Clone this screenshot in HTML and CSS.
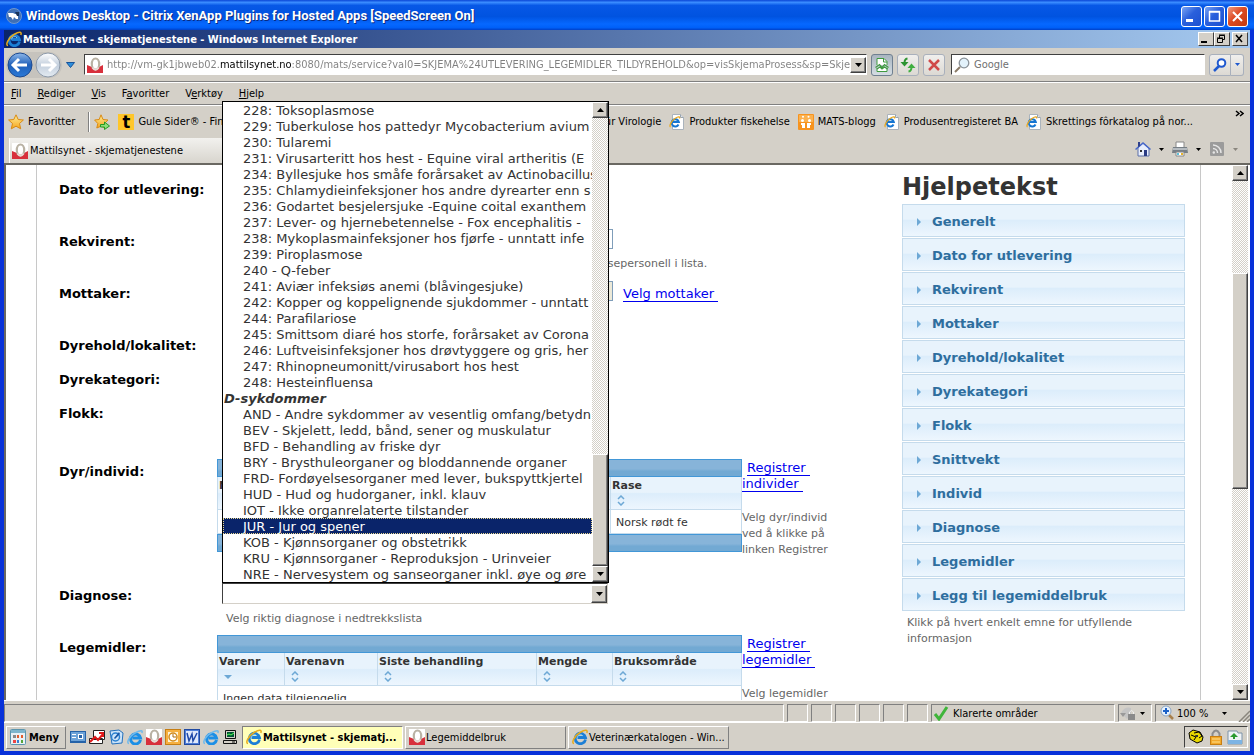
FILE: index.html
```html
<!DOCTYPE html>
<html lang="no">
<head>
<meta charset="utf-8">
<title>Mattilsynet - skjematjenestene</title>
<link rel="stylesheet" href="styles.css">
</head>
<body>
<svg class="sprite" aria-hidden="true">
  <defs>
    <linearGradient id="g-blue" x1="0" y1="0" x2="0" y2="1"><stop offset="0" stop-color="#8fb8ea"/><stop offset=".5" stop-color="#1f5fb8"/><stop offset="1" stop-color="#2b7ad8"/></linearGradient>
    <linearGradient id="g-pale" x1="0" y1="0" x2="0" y2="1"><stop offset="0" stop-color="#ffffff"/><stop offset=".5" stop-color="#c3cfdd"/><stop offset="1" stop-color="#e4ebf2"/></linearGradient>
    <linearGradient id="g-gold" x1="0" y1="0" x2="0" y2="1"><stop offset="0" stop-color="#ffef9a"/><stop offset="1" stop-color="#f5a51c"/></linearGradient>
  </defs>
  <symbol id="i-lock" viewBox="0 0 16 16"><path fill="#fff" d="M0 0h16v16H0z"/><path fill="#d8303c" d="M0 8l5 2 7 0 4-2v8H0z"/><ellipse cx="8.500" cy="7" rx="3.700" ry="5.500" fill="#fff" stroke="#b9b2a4" stroke-width="2.200"/><path d="M5.500 10.500q3 4.500 6 0" fill="none" stroke="#ead9d4" stroke-width="2"/></symbol>
  <symbol id="i-ie" viewBox="0 0 16 16"><path d="M13.500 10.500A5.200 5.200 0 1 1 13.500 8.500H5.500" fill="none" stroke="#1c7fd6" stroke-width="2.800"/><path d="M5.500 8.500A3 3 0 0 1 11 7" fill="none" stroke="#7cc4f4"/><path d="M2 14.500C-1 14.500 2 7 8 3.500S16 1 14.800 4" fill="none" stroke="#e8ac1c" stroke-width="1.500"/></symbol>
  <symbol id="i-iequick" viewBox="0 0 16 16"><path d="M13.500 11A5 5 0 1 1 13.500 9H5.500" fill="none" stroke="#1c8fe6" stroke-width="3"/><path d="M2 14.500C-1 14.500 2 7 8 4S16 1 14.800 4" fill="none" stroke="#6fb9ec" stroke-width="1.500"/></symbol>
  <symbol id="i-page" viewBox="0 0 16 16"><path d="M3.500.500h8l3 3v12h-11z" fill="#fff" stroke="#aab3bc"/><path d="M11.500.500v3h3" fill="#dfe4ea" stroke="#9aa4ae"/><path d="M9.500 10.500A3.600 3.600 0 1 1 9.800 8H3" fill="none" stroke="#1676d2" stroke-width="2"/><path d="M1.500 13C0 12.500 2 7 6 4.500S11 3 10.500 4.500" fill="none" stroke="#eaa81e" stroke-width="1.300"/></symbol>
  <symbol id="i-star" viewBox="0 0 16 16"><path d="M8 .8l2.200 4.700 5.200.5-3.900 3.500 1.200 5.300L8 12.200l-4.700 2.600 1.200-5.300L.6 6l5.200-.5z" fill="url(#g-gold)" stroke="#d98a14"/></symbol>
  <symbol id="i-staradd" viewBox="0 0 16 16"><path d="M7 .8l2 4.700 5 .5-3.700 3.500 1 4.500L7 12.200 2.800 14l1-4.500L.6 6l4.600-.5z" fill="url(#g-gold)" stroke="#d98a14"/><path d="M6.500 10.500h4V8l5 4-5 3.500V13h-4z" fill="#8ee07a" stroke="#259a23"/></symbol>
  <symbol id="i-mats" viewBox="0 0 16 16"><rect width="16" height="16" rx="1" fill="#f7931e"/><path d="M1 1h14v7H1z" fill="#fbb14f"/><g fill="#fff"><circle cx="4.500" cy="6.500" r="1.500"/><circle cx="11.500" cy="6.500" r="1.500"/><circle cx="5" cy="2.800" r="1"/><circle cx="10.500" cy="2.800" r="1"/><path d="M3 9h4v5H4V11H3zM9 9h4v2h-1v3H9z"/></g></symbol>
  <symbol id="i-down" viewBox="0 0 7 4"><path d="M0 0h7L3.500 4z"/></symbol>
  <symbol id="i-up" viewBox="0 0 7 4"><path d="M0 4h7L3.500 0z"/></symbol>
  <symbol id="i-sort" viewBox="0 0 8 11"><path d="M1 4l3-3 3 3M1 7l3 3 3-3" fill="none" stroke="#6da8d5" stroke-width="1.500"/></symbol>
  <symbol id="i-right" viewBox="0 0 4 8"><path d="M0 0l4 4-4 4z" fill="#6da8d5"/></symbol>
  <symbol id="i-mag" viewBox="0 0 16 16"><path d="M1 15l5-5" stroke="#8a7a66" stroke-width="2"/><circle cx="10" cy="6" r="4.800" fill="#e3f2fb" stroke="#8a9299" stroke-width="1.300"/></symbol>
</svg>

<div class="desktop">
  <header class="xp-title">
    <svg class="icon" viewBox="0 0 16 16"><circle cx="8" cy="8" r="7.500" fill="#3f6fb4" stroke="#6f97cf"/><path d="M2 5h5l2 1h3v5h-2l-2-2-1 3-2-3H3z" fill="#fff"/><path d="M9 4h4v4h-2z" fill="#18345c"/></svg>
    <h1 class="xp-name">Windows Desktop - Citrix XenApp Plugins for Hosted Apps [SpeedScreen On]</h1>
    <button class="xp-btn" aria-label="Minimer"><svg viewBox="0 0 19 19"><path d="M4 12h7v3H4z" fill="#fff"/></svg></button>
    <button class="xp-btn" aria-label="Maksimer"><svg viewBox="0 0 19 19"><path d="M4.500 5h10v9h-10zM4 4.500h11" fill="none" stroke="#fff" stroke-width="1.500"/></svg></button>
    <button class="xp-btn xp-btn--close" aria-label="Lukk"><svg viewBox="0 0 19 19"><path d="M5 5l9 9m0-9l-9 9" stroke="#fff" stroke-width="2"/></svg></button>
  </header>

  <div class="screen">
    <header class="ie-title">
      <svg class="icon"><use href="#i-ie"/></svg>
      <h2 class="ie-name">Mattilsynet - skjematjenestene - Windows Internet Explorer</h2>
      <button class="ie-btn" aria-label="Minimer vindu"><svg viewBox="0 0 12 10"><path d="M2 7h6v2H2z"/></svg></button>
      <button class="ie-btn" aria-label="Gjenopprett vindu"><svg viewBox="0 0 12 10"><path d="M4.500 4V1.500h5v4H8M2.500 4.500h5v4h-5zM4 1h6M2 4h6" fill="none" stroke="#000"/></svg></button>
      <button class="ie-btn ie-btn--close" aria-label="Lukk vindu"><svg viewBox="0 0 12 10"><path d="M3 1l6 7m0-7L3 8" stroke="#000" stroke-width="1.500"/></svg></button>
    </header>

    <div class="nav">
      <div class="travel">
        <button class="round" aria-label="Tilbake"><svg viewBox="0 0 26 26"><circle cx="13" cy="13" r="12" fill="url(#g-blue)" stroke="#1d4a91"/><path d="M12 7l-6 6 6 6M7 13h13" fill="none" stroke="#fff" stroke-width="3"/></svg></button>
        <button class="round" aria-label="Fremover"><svg viewBox="0 0 26 26"><circle cx="13" cy="13" r="12" fill="url(#g-pale)" stroke="#8d9aaa"/><path d="M14 7l6 6-6 6M19 13H6" fill="none" stroke="#fff" stroke-width="3"/></svg></button>
      </div>
      <button class="bare" aria-label="Nylige sider"><svg class="recent" viewBox="0 0 9 6"><path d="M.5.500h8l-4 5z" fill="#2d8fdc" stroke="#17539a"/></svg></button>
      <div class="address">
        <svg class="icon"><use href="#i-lock"/></svg>
        <input class="url" type="text" aria-label="Adresse" value="http://vm-gk1jbweb02.mattilsynet.no:8080/mats/service?val0=SKJEMA%24UTLEVERING_LEGEMIDLER_TILDYREHOLD&amp;op=visSkjemaProsess&amp;sp=SkjemaProsess">
        <button class="classic" aria-label="Vis adresser"><svg class="tri"><use href="#i-down"/></svg></button>
      </div>
      <button class="tool tool--on" aria-label="Kompatibilitetsvisning"><svg class="icon" viewBox="0 0 16 16"><path d="M3 8V1.500h7l3 3V8M3 11v3.500h10V11" fill="#fff" stroke="#3f9a3f"/><path d="M9.500 1.500V5H13" fill="none" stroke="#3f9a3f"/><path d="M1.500 10.500l4-3 2.500 3 2.500-3 4 3M3 12l3-2 2 2 2.500-2 3 2" fill="none" stroke="#3f9a3f" stroke-width="1.200"/></svg></button>
      <button class="tool" aria-label="Oppdater"><svg class="icon" viewBox="0 0 16 16"><path d="M7.500 1.500Q4.500 2 4.500 6" fill="none" stroke="#2d9432" stroke-width="2"/><path d="M.5 5h8l-4 4.500z" fill="#2d9432"/><path d="M8.500 14.500q3-.5 3-4.500" fill="none" stroke="#3fae3f" stroke-width="2"/><path d="M7.500 11h8l-4-4.500z" fill="#3fae3f"/></svg></button>
      <button class="tool" aria-label="Stopp"><svg class="icon" viewBox="0 0 16 16"><path d="M3 3l10 10m0-10L3 13" stroke="#d04a4a" stroke-width="2.500"/></svg></button>
      <div class="search">
        <svg class="icon"><use href="#i-mag"/></svg>
        <input class="search-text" type="text" aria-label="Søk" placeholder="Google">
      </div>
      <div class="searchgo">
        <button class="tool tool--go" aria-label="Søk nå"><svg class="icon" viewBox="0 0 16 16"><path d="M2 14l5-5" stroke="#2059cf" stroke-width="2.500"/><circle cx="9.500" cy="6" r="3.800" fill="#fff" stroke="#2059cf" stroke-width="2"/></svg></button>
        <button class="tool tool--arrow" aria-label="Søkevalg"><svg class="tri tri--small tri--blue"><use href="#i-down"/></svg></button>
      </div>
    </div>

    <nav class="menu">
      <button class="menu-item"><u>F</u>il</button>
      <button class="menu-item"><u>R</u>ediger</button>
      <button class="menu-item"><u>V</u>is</button>
      <button class="menu-item">F<u>a</u>voritter</button>
      <button class="menu-item">V<u>e</u>rktøy</button>
      <button class="menu-item"><u>H</u>jelp</button>
    </nav>

    <div class="favs">
      <button class="fav"><svg class="icon"><use href="#i-star"/></svg>Favoritter</button>
      <span class="sep"></span>
      <button class="fav" aria-label="Legg til favoritt"><svg class="icon"><use href="#i-staradd"/></svg></button>
      <a class="fav fav--wide" href="#"><span class="gule">t</span>Gule Sider® - Finn</a>
      <a class="fav" href="#"><svg class="icon"><use href="#i-page"/></svg>für Virologie</a>
      <a class="fav" href="#"><svg class="icon"><use href="#i-page"/></svg>Produkter fiskehelse</a>
      <a class="fav" href="#"><svg class="icon"><use href="#i-mats"/></svg>MATS-blogg</a>
      <a class="fav" href="#"><svg class="icon"><use href="#i-page"/></svg>Produsentregisteret BA</a>
      <a class="fav" href="#"><svg class="icon"><use href="#i-page"/></svg>Skrettings fôrkatalog på nor...</a>
      <button class="more" aria-label="Flere favoritter"><svg viewBox="0 0 9 7"><path d="M1 1l3 2.500L1 6M5 1l3 2.500L5 6" fill="none" stroke="#000" stroke-width="1.500"/></svg></button>
    </div>

    <div class="tabs">
      <button class="tab"><svg class="icon"><use href="#i-lock"/></svg>Mattilsynet - skjematjenestene</button>
      <div class="commands">
        <button class="bare" aria-label="Startside"><svg class="icon" viewBox="0 0 16 16"><path d="M3 7v8h11V7L8 2z" fill="#e8eefc" stroke="#5a6ea8"/><path d="M0 8l8-7 8 7-1 1-7-6-7 6z" fill="#4868c8"/><path d="M3 1h2v4L3 6z" fill="#2d3f8c"/><path d="M9 9h3v6H9z" fill="#2a3b84"/><path d="M5 9h2v2H5z" fill="#333"/></svg></button>
        <button class="bare" aria-label="Startsidevalg"><svg class="tri tri--small"><use href="#i-down"/></svg></button>
        <button class="bare" aria-label="Skriv ut"><svg class="icon" viewBox="0 0 16 16"><path d="M4 1h8v6H4z" fill="#fff" stroke="#888"/><path d="M1 6h14l1 6H0z" fill="#777f86"/><path d="M1 7h14v2H1z" fill="#b6bcc1"/><path d="M4 11h8v4H4z" fill="#fff" stroke="#888"/><path d="M5 12h2v2H5z" fill="#5cc0d8"/><path d="M9 12h2v2H9z" fill="#e7b42a"/></svg></button>
        <button class="bare" aria-label="Utskriftsvalg"><svg class="tri tri--small"><use href="#i-down"/></svg></button>
        <button class="bare" aria-label="Kilder"><svg class="icon" viewBox="0 0 16 16"><rect x="1" y="1" width="14" height="14" rx="1" fill="#9b9b9b"/><circle cx="4.800" cy="11.500" r="1.200" fill="#e6e6e6"/><path d="M4 7.500a4.500 4.500 0 0 1 4.500 4.500M4 4a8 8 0 0 1 8 8" fill="none" stroke="#e6e6e6" stroke-width="1.500"/></svg></button>
        <button class="bare" aria-label="Kildevalg"><svg class="tri tri--small tri--off"><use href="#i-down"/></svg></button>
      </div>
    </div>

    <div class="view">
      <main class="page">
        <form class="form">
          <div class="row row--tall"><span class="label">Dato for utlevering:</span></div>
          <div class="row row--tall">
            <label class="label" for="rekvirent">Rekvirent:</label>
            <div class="field"><input class="box" id="rekvirent" type="text"><p class="hint hint--deep">helsepersonell i lista.</p></div>
          </div>
          <div class="row row--tall">
            <label class="label" for="mottaker">Mottaker:</label>
            <div class="field field--line"><input class="box box--off" id="mottaker" type="text" readonly><a class="pick" href="#">Velg mottaker</a></div>
          </div>
          <div class="row"><span class="label">Dyrehold/lokalitet:</span></div>
          <div class="row"><span class="label">Dyrekategori:</span></div>
          <div class="row row--flokk"><span class="label">Flokk:</span></div>
          <div class="row row--individ">
            <span class="label">Dyr/individ:</span>
            <div class="grid">
              <div class="bar"></div>
              <table class="table">
                <thead><tr><th class="c-nr">Nr<svg class="sort"><use href="#i-sort"/></svg></th><th>Rase<svg class="sort"><use href="#i-sort"/></svg></th></tr></thead>
                <tbody><tr><td></td><td>Norsk rødt fe</td></tr></tbody>
              </table>
              <div class="bar"></div>
            </div>
            <div class="side"><a class="reg" href="#">Registrer individer</a><p class="note">Velg dyr/individ ved å klikke på linken Registrer</p></div>
          </div>
          <div class="row row--tall">
            <label class="label" for="diagnose">Diagnose:</label>
            <div class="field">
              <div class="combo"><select class="combo-select" id="diagnose"><option></option></select><span class="classic classic--combo"><svg class="tri"><use href="#i-down"/></svg></span></div>
              <p class="hint">Velg riktig diagnose i nedtrekkslista</p>
            </div>
          </div>
          <div class="row row--individ">
            <span class="label">Legemidler:</span>
            <div class="grid">
              <div class="bar"></div>
              <table class="table">
                <thead><tr>
                  <th class="c-varenr">Varenr<svg class="sort" viewBox="0 0 8 11"><path d="M0 4h8L4 8z" fill="#6da8d5"/></svg></th>
                  <th class="c-navn">Varenavn<svg class="sort"><use href="#i-sort"/></svg></th>
                  <th class="c-siste">Siste behandling<svg class="sort"><use href="#i-sort"/></svg></th>
                  <th class="c-mengde">Mengde<svg class="sort"><use href="#i-sort"/></svg></th>
                  <th>Bruksområde<svg class="sort"><use href="#i-sort"/></svg></th>
                </tr></thead>
                <tbody><tr><td colspan="5">Ingen data tilgjengelig</td></tr></tbody>
              </table>
            </div>
            <div class="side"><a class="reg" href="#">Registrer legemidler</a><p class="note">Velg legemidler</p></div>
          </div>
        </form>

        <aside class="help">
          <h2 class="help-title">Hjelpetekst</h2>
          <div class="accordion">
            <button class="acc"><svg class="acc-arrow"><use href="#i-right"/></svg>Generelt</button>
            <button class="acc"><svg class="acc-arrow"><use href="#i-right"/></svg>Dato for utlevering</button>
            <button class="acc"><svg class="acc-arrow"><use href="#i-right"/></svg>Rekvirent</button>
            <button class="acc"><svg class="acc-arrow"><use href="#i-right"/></svg>Mottaker</button>
            <button class="acc"><svg class="acc-arrow"><use href="#i-right"/></svg>Dyrehold/lokalitet</button>
            <button class="acc"><svg class="acc-arrow"><use href="#i-right"/></svg>Dyrekategori</button>
            <button class="acc"><svg class="acc-arrow"><use href="#i-right"/></svg>Flokk</button>
            <button class="acc"><svg class="acc-arrow"><use href="#i-right"/></svg>Snittvekt</button>
            <button class="acc"><svg class="acc-arrow"><use href="#i-right"/></svg>Individ</button>
            <button class="acc"><svg class="acc-arrow"><use href="#i-right"/></svg>Diagnose</button>
            <button class="acc"><svg class="acc-arrow"><use href="#i-right"/></svg>Legemidler</button>
            <button class="acc"><svg class="acc-arrow"><use href="#i-right"/></svg>Legg til legemiddelbruk</button>
          </div>
          <p class="help-note">Klikk på hvert enkelt emne for utfyllende informasjon</p>
        </aside>
      </main>
      <div class="scroll">
        <button class="classic" aria-label="Rull opp"><svg class="tri"><use href="#i-up"/></svg></button>
        <div class="track track--page"><span class="thumb thumb--page"></span></div>
        <button class="classic" aria-label="Rull ned"><svg class="tri"><use href="#i-down"/></svg></button>
      </div>
    </div>

    <footer class="status">
      <span class="pane pane--fill"></span>
      <span class="pane pane--small"></span><span class="pane pane--small"></span><span class="pane pane--small"></span><span class="pane pane--small"></span><span class="pane pane--small"></span><span class="pane pane--small"></span>
      <span class="pane pane--zone"><svg class="icon" viewBox="0 0 16 16"><path d="M2 9l4 5 8-12" fill="none" stroke="#3fb53a" stroke-width="3"/></svg>Klarerte områder</span>
      <span class="pane pane--filter"><svg class="icon" viewBox="0 0 16 16"><path d="M1 8q4-7 10-5v6l-4 5z" fill="#c4c4c4"/><path d="M0 8h6l-3 4z" fill="#999"/><path d="M8 9h7v6H8z" fill="#8a8a8a"/><path d="M9.500 9V7q2-3 4 0v2" fill="none" stroke="#eee"/></svg><svg class="tri tri--small"><use href="#i-down"/></svg></span>
      <span class="pane pane--zoom"><svg class="icon" viewBox="0 0 16 16"><path d="M10 10l4 4" stroke="#a8804c" stroke-width="2.500"/><circle cx="7" cy="6" r="5" fill="#e6f1fc" stroke="#8aa4c2"/><path d="M4 6h6M7 3v6" stroke="#1c62c8" stroke-width="2"/></svg>100 %<svg class="tri tri--small tri--end"><use href="#i-down"/></svg></span>
      <svg class="grip" viewBox="0 0 12 12"><path d="M1 12L12 1M5 12l7-7M9 12l3-3" stroke="#8a867e" stroke-width="1.500"/></svg>
    </footer>

    <footer class="taskbar">
      <button class="start"><svg class="icon" viewBox="0 0 16 16"><rect x=".5" y=".5" width="15" height="15" rx="1" fill="#e9f1f5" stroke="#5c95ad"/><path d="M1 1h14v3H1z" fill="#7db5cc"/><path d="M3 6h3v3H3z" fill="#888"/><path d="M7 6h2v3H7zM11 6h2v3h-2z" fill="#e25c2c"/><path d="M3 11h3v3H3z" fill="#e44"/><path d="M7 11h2v3H7z" fill="#3a7fd0"/><path d="M11 11h2v3h-2z" fill="#57a53a"/></svg>Meny</button>
      <div class="quick">
        <button class="bare" aria-label="Skrivebord"><svg class="icon" viewBox="0 0 16 16"><path d="M0 2h16v12H0z" fill="#2462a8"/><path d="M1 3h14v9H1z" fill="#6da3d8"/><path d="M2 5h4v1H2zM2 8h4v1H2zM8 5h5v5H8z" fill="#fff"/><path d="M9 6h3v3H9z" fill="#2462a8"/></svg></button>
        <button class="bare" aria-label="Diagram"><svg class="icon" viewBox="0 0 16 16"><path d="M4.500 1.500h11v9h-11zM.5 9.500h13v5H.5z" fill="#fff" stroke="#222"/><path d="M1 13l5-5 3 3 5-6M10 4h4v4" fill="none" stroke="#e01818" stroke-width="2"/></svg></button>
        <button class="bare" aria-label="Outlook Express"><svg class="icon" viewBox="0 0 16 16"><path d="M2 2l9-1 4 3-1 10-10 1z" fill="#cbe4fa" stroke="#2370bc"/><circle cx="7.500" cy="8" r="4" fill="none" stroke="#2a80d0" stroke-width="1.500"/><path d="M6 9l5-6 1 2-5 5z" fill="#1557a8"/></svg></button>
        <button class="bare" aria-label="Internet Explorer"><svg class="icon"><use href="#i-iequick"/></svg></button>
        <button class="bare" aria-label="Mattilsynet"><svg class="icon"><use href="#i-lock"/></svg></button>
        <button class="bare" aria-label="Kalender"><svg class="icon" viewBox="0 0 16 16"><rect x=".5" y=".5" width="15" height="15" fill="#f6b040" stroke="#c67d12"/><path d="M3 3h10v10H3z" fill="#fff4d6"/><circle cx="8" cy="8" r="4" fill="#fff" stroke="#d28a1c" stroke-width="1.500"/><path d="M8 5v3h3" fill="none" stroke="#a86a10"/></svg></button>
        <button class="bare" aria-label="Word"><svg class="icon" viewBox="0 0 16 16"><rect x=".5" y=".5" width="15" height="15" fill="#4f7fd8" stroke="#2049a0"/><path d="M2 2h12v12H2z" fill="#dfe9fb"/><path d="M3 4l2 8 3-7 1 7 4-8" fill="none" stroke="#1f49a8" stroke-width="1.500"/></svg></button>
        <button class="bare" aria-label="Nettleser"><svg class="icon"><use href="#i-iequick"/></svg></button>
        <button class="bare" aria-label="Datamaskin"><svg class="icon" viewBox="0 0 16 16"><path d="M3.500 1.500h10v8h-10zM1.500 11.500h13v3h-13z" fill="#d4d0c8" stroke="#111"/><path d="M5 3h7v5H5z" fill="#053"/><path d="M5 6l2-1 2 1 3-2" fill="none" stroke="#5f5"/><path d="M10 13h3" stroke="#111"/></svg></button>
      </div>
      <button class="task task--on"><svg class="icon"><use href="#i-ie"/></svg>Mattilsynet - skjematj...</button>
      <button class="task"><svg class="icon"><use href="#i-lock"/></svg>Legemiddelbruk</button>
      <button class="task"><svg class="icon"><use href="#i-ie"/></svg>Veterinærkatalogen - Win...</button>
      <div class="tray">
        <svg class="icon" viewBox="0 0 16 16"><path d="M1 4l4-3 7 2 3 5-1 4-5 2-7-4z" fill="#e8d800" stroke="#000"/><path d="M6 4l5-1 3 4-3 2" fill="none" stroke="#000"/><path d="M3 6l5 2-2 3" fill="none" stroke="#000"/><path d="M7 6l3 0 0 2-2 0z" fill="#333"/></svg>
        <svg class="icon" viewBox="0 0 16 16"><path d="M4.500 8V4.500q3.500-6 7 0V8" fill="none" stroke="#8c8c8c" stroke-width="2"/><rect x="2.500" y="7.500" width="11" height="8" fill="#f2a92c" stroke="#c87f12"/><path d="M4 10h8M4 13h8" stroke="#ffe08a"/></svg>
        <svg class="icon" viewBox="0 0 16 16"><path d="M1 2h9l1 2h4v11H1z" fill="#eef2f5" stroke="#7f93a8"/><path d="M1 11h14v4H1z" fill="#7db4e4"/><path d="M6 10V8H3l4-4 4 4H8v2z" fill="#2b9a30"/></svg>
      </div>
    </footer>
  </div>

  <div class="popup">
    <ul class="list" role="listbox" aria-label="Diagnose">
      <li class="opt" role="option">228: Toksoplasmose</li>
      <li class="opt" role="option">229: Tuberkulose hos pattedyr Mycobacterium avium</li>
      <li class="opt" role="option">230: Tularemi</li>
      <li class="opt" role="option">231: Virusarteritt hos hest - Equine viral artheritis (E</li>
      <li class="opt" role="option">234: Byllesjuke hos småfe forårsaket av Actinobacillus</li>
      <li class="opt" role="option">235: Chlamydieinfeksjoner hos andre dyrearter enn s</li>
      <li class="opt" role="option">236: Godartet besjelersjuke -Equine coital exanthem</li>
      <li class="opt" role="option">237: Lever- og hjernebetennelse - Fox encephalitis -</li>
      <li class="opt" role="option">238: Mykoplasmainfeksjoner hos fjørfe - unntatt infe</li>
      <li class="opt" role="option">239: Piroplasmose</li>
      <li class="opt" role="option">240 - Q-feber</li>
      <li class="opt" role="option">241: Aviær infeksiøs anemi (blåvingesjuke)</li>
      <li class="opt" role="option">242: Kopper og koppelignende sjukdommer - unntatt</li>
      <li class="opt" role="option">244: Parafilariose</li>
      <li class="opt" role="option">245: Smittsom diaré hos storfe, forårsaket av Corona</li>
      <li class="opt" role="option">246: Luftveisinfeksjoner hos drøvtyggere og gris, her</li>
      <li class="opt" role="option">247: Rhinopneumonitt/virusabort hos hest</li>
      <li class="opt" role="option">248: Hesteinfluensa</li>
      <li class="opt opt--group" role="presentation">D-sykdommer</li>
      <li class="opt" role="option">AND - Andre sykdommer av vesentlig omfang/betydn</li>
      <li class="opt" role="option">BEV - Skjelett, ledd, bånd, sener og muskulatur</li>
      <li class="opt" role="option">BFD - Behandling av friske dyr</li>
      <li class="opt" role="option">BRY - Brysthuleorganer og bloddannende organer</li>
      <li class="opt" role="option">FRD- Fordøyelsesorganer med lever, bukspyttkjertel</li>
      <li class="opt" role="option">HUD - Hud og hudorganer, inkl. klauv</li>
      <li class="opt" role="option">IOT - Ikke organrelaterte tilstander</li>
      <li class="opt opt--on" role="option" aria-selected="true">JUR - Jur og spener</li>
      <li class="opt" role="option">KOB - Kjønnsorganer og obstetrikk</li>
      <li class="opt" role="option">KRU - Kjønnsorganer - Reproduksjon - Urinveier</li>
      <li class="opt" role="option">NRE - Nervesystem og sanseorganer inkl. øye og øre</li>
    </ul>
    <div class="scroll">
      <button class="classic" aria-label="Forrige"><svg class="tri"><use href="#i-up"/></svg></button>
      <div class="track track--popup"><span class="thumb thumb--popup"></span></div>
      <button class="classic" aria-label="Neste"><svg class="tri"><use href="#i-down"/></svg></button>
    </div>
  </div>
</div>
</body>
</html>
```
FILE: styles.css
```css
* { box-sizing: border-box; }
body { margin: 0; font-family: "DejaVu Sans Condensed", "DejaVu Sans", sans-serif; font-size: 11px; color: #000; }
button, input, select { font: inherit; color: inherit; margin: 0; padding: 0; border: 0; background: none; }
h1, h2, p, ul { margin: 0; padding: 0; }
a { color: inherit; text-decoration: none; }
.sprite { position: absolute; width: 0; height: 0; }
.icon { width: 16px; height: 16px; flex: none; }
.tri { width: 7px; height: 4px; flex: none; }
.tri--small { width: 5px; height: 3px; }
.tri--blue { fill: #2059cf; }
.tri--off { fill: #8a867e; }
.tri--end { margin-left: auto; }
.bare { display: flex; align-items: center; }

.desktop { position: relative; display: flex; flex-direction: column; height: 100vh; min-height: 700px; padding: 0 4px 4px; background: #0831d9; overflow: hidden; }
.xp-title { display: flex; align-items: center; gap: 2px; height: 30px; flex: none; margin: 0 -4px; padding: 2px 6px 0; background: linear-gradient(#0a46d6, #3a8cff 8%, #0758e6 18%, #0053e0 55%, #0668ff 80%, #0060f8 92%, #0040c8); }
.xp-name { flex: 1; padding-left: 2px; font-family: Roboto, sans-serif; font-size: 13px; font-weight: 700; line-height: 20px; color: #fff; text-shadow: 1px 1px #0a2a80; white-space: nowrap; }
.xp-btn { width: 21px; height: 21px; border: 1px solid #fff; border-radius: 3px; background: linear-gradient(135deg, #7ba4f4, #2a60dc 45%, #1c50d0); }
.xp-btn--close { background: linear-gradient(135deg, #f09a80, #dd4a22 45%, #c43a10); }
.xp-btn svg { display: block; width: 19px; height: 19px; }

.screen { display: flex; flex-direction: column; flex: 1; min-height: 0; background: #d4d0c8; }
.ie-title { display: flex; align-items: center; height: 18px; flex: none; padding: 0 2px; background: linear-gradient(90deg, #0a246a, #a6caf0); }
.ie-name { flex: 1; padding-left: 1px; font-size: 11px; font-weight: 700; color: #fff; white-space: nowrap; }
.ie-btn { width: 16px; height: 14px; border: 1px solid; border-color: #fff #404040 #404040 #fff; background: #d4d0c8; }
.ie-btn--close { margin-left: 2px; }
.ie-btn svg { display: block; width: 12px; height: 10px; }

.nav { display: flex; align-items: center; gap: 4px; height: 34px; flex: none; padding: 0 6px 0 2px; border-bottom: 1px solid #808080; }
.travel { display: flex; gap: 2px; padding: 0 1px; border-radius: 13px; background: #c6c3bd; }
.round { width: 26px; height: 26px; }
.round svg { display: block; width: 26px; height: 26px; }
.recent { width: 9px; height: 6px; }
.address { display: flex; align-items: center; flex: 1 1 783px; min-width: 0; height: 21px; margin-left: 5px; padding-left: 2px; border: 1px solid; border-color: #404040 #fff #fff #404040; background: #fff; }
.url { flex: 1; min-width: 0; margin-left: 4px; height: 18px; color: transparent; background: linear-gradient(90deg, #808080 113px, #000 113px 185px, #808080 185px); -webkit-background-clip: text; background-clip: text; outline: 0; }
.classic { display: flex; align-items: center; justify-content: center; width: 16px; height: 16px; flex: none; border: 1px solid; border-color: #fff #404040 #404040 #fff; box-shadow: inset -1px -1px #808080; background: #d4d0c8; }
.tool { display: flex; align-items: center; justify-content: center; width: 22px; height: 22px; flex: none; border: 1px solid #a9b0bc; border-radius: 3px; background: linear-gradient(#f0efed, #dcd9d3); }
.tool--on { border-color: #6f7f90; background: linear-gradient(#a9b5c0, #d5dde3); }
.search { display: flex; align-items: center; flex: 0 1 254px; height: 21px; margin-left: 2px; padding: 0 2px; gap: 4px; border: 1px solid; border-color: #404040 #fff #fff #404040; background: #fff; }
.search-text { flex: 1; min-width: 0; outline: 0; }
.search-text::placeholder { color: #707070; opacity: 1; }
.searchgo { display: flex; }
.tool--go { border-radius: 3px 0 0 3px; }
.tool--arrow { width: 13px; border-left: 0; border-radius: 0 3px 3px 0; }

.menu { display: flex; align-items: center; gap: 16px; height: 23px; flex: none; padding: 1px 7px 0; border-top: 1px solid #fff; border-bottom: 1px solid #808080; }
.menu-item { line-height: 16px; }

.favs { display: flex; align-items: center; gap: 8px; height: 33px; flex: none; padding: 0 6px 0 4px; border-top: 1px solid #fff; }
.fav { display: flex; align-items: center; gap: 4px; flex: none; line-height: 16px; white-space: nowrap; }
.fav--wide { width: 455px; }
.sep { width: 2px; height: 20px; margin: 0 -4px 0 5px; border-left: 1px solid #808080; border-right: 1px solid #fff; }
.gule { display: flex; align-items: center; justify-content: center; width: 16px; height: 16px; background: #ffc629; font-size: 18px; font-weight: 700; line-height: 16px; }
.more { align-self: flex-start; width: 9px; margin: 1px 0 0 auto; }
.more svg { width: 9px; height: 7px; }

.tabs { display: flex; align-items: flex-end; justify-content: space-between; height: 27px; flex: none; padding-left: 5px; border-bottom: 2px solid #6a6862; }
.tab { display: flex; align-items: center; gap: 2px; width: 260px; height: 25px; padding-left: 2px; border-left: 1px solid #fff; background: linear-gradient(#f2f1ee, #d8d5ce); }
.commands { display: flex; align-items: center; gap: 8px; height: 27px; padding: 0 12px 1px 0; }

.view { display: flex; flex: 1; min-height: 0; padding-right: 2px; border-left: 2px solid #6a6862; background: #fff; overflow: hidden; }
.page { display: flex; align-items: flex-start; justify-content: space-between; flex: 1; min-width: 0; margin: 0 31px 0 30px; border: solid #c8c8c8; border-width: 0 1px; padding: 0 15px 0 22px; font-family: "DejaVu Sans", sans-serif; overflow: hidden; }
.form { padding-top: 12px; flex: none; }
.row { display: flex; min-height: 34px; }
.row--tall { min-height: 52px; }
.row--flokk { min-height: 58px; }
.row--individ { min-height: 124px; }
.label { width: 158px; flex: none; padding-top: 5px; font-size: 13px; font-weight: 700; line-height: 16px; }
.field { display: flex; flex-direction: column; gap: 7px; width: 525px; padding-left: 5px; }
.field--line { flex-direction: row; align-items: flex-start; gap: 10px; }
.box { width: 391px; height: 20px; flex: none; border: 1px solid #7f9db9; background: #fff; }
.box--off { background: #ece9d8; }
.hint { padding-left: 4px; font-size: 11px; line-height: 16px; color: #666; white-space: nowrap; }
.hint--deep { padding-left: 369px; }
.pick, .reg { font-size: 13px; line-height: 16px; color: #00e; border-bottom: 1px solid #00e; padding-right: 4px; }
.pick { margin-top: 5px; line-height: 15px; white-space: nowrap; }
.side { width: 98px; flex: none; padding-top: 1px; font-size: 13px; line-height: 16px; text-indent: 5px; }
.reg { -webkit-box-decoration-break: clone; box-decoration-break: clone; }
.note { padding-top: 18px; font-size: 11px; line-height: 16px; text-indent: 0; color: #666; }

.grid { width: 525px; flex: none; }
.bar { height: 18px; border: 1px solid #4297d7; background: linear-gradient(#87b4d9 55%, #72a9d3 70%); }
.table { width: 100%; border-collapse: separate; border-spacing: 0; table-layout: fixed; border-left: 1px solid #c5dbec; font-size: 11px; color: #333; }
.table th { height: 33px; padding: 1px 0 0 1px; text-align: left; vertical-align: top; line-height: 16px; border: solid #c5dbec; border-width: 0 1px 1px 0; background: linear-gradient(#e8f3fc 48%, #dcedfb 52%, #edf6fe); white-space: nowrap; }
.table td { height: 24px; padding: 1px 5px 0; border: solid #c5dbec; border-width: 0 1px 1px 0; }
.sort { display: block; width: 8px; height: 11px; margin: 1px 0 0 5px; }
.c-nr { width: 393px; }
.c-varenr { width: 67px; }
.c-navn { width: 93px; }
.c-siste { width: 159px; }
.c-mengde { width: 76px; }

.combo { display: flex; align-items: center; width: 386px; height: 21px; border: 1px solid; border-color: #404040 #d4d0c8 #d4d0c8 #404040; background: #fff; }
.combo-select { flex: 1; min-width: 0; height: 18px; appearance: none; outline: 0; }
.classic--combo { height: 18px; }

.help { width: 283px; flex: none; padding-top: 6px; }
.help-title { height: 33px; font-size: 24px; line-height: 33px; color: #333; }
.accordion { display: flex; flex-direction: column; gap: 1px; }
.acc { display: flex; align-items: center; gap: 11px; height: 33px; padding: 2px 0 0 14px; border: 1px solid #c5dbec; background: linear-gradient(#e8f3fc 45%, #dcedfb 50%, #edf6fe); font-size: 13px; font-weight: 700; color: #2e6e9e; text-align: left; }
.acc-arrow { width: 4px; height: 8px; flex: none; }
.help-note { padding: 4px 5px; font-size: 11px; line-height: 16px; color: #666; }

.scroll { display: flex; flex-direction: column; width: 16px; flex: none; background: repeating-conic-gradient(#fff 0 25%, #d4d0c8 0 50%) 0 0 / 2px 2px; }
.track { display: flex; flex-direction: column; flex: 1; min-height: 0; }
.thumb { display: block; border: 1px solid; border-color: #fff #404040 #404040 #fff; box-shadow: inset -1px -1px #808080; background: #d4d0c8; }
.track--page { padding: 92px 0 195px; }
.thumb--page { flex: 1; }
.track--popup { justify-content: flex-end; }
.thumb--popup { height: 112px; }

.status { display: flex; align-items: center; gap: 3px; height: 22px; flex: none; padding: 3px 0 0; border-top: 1px solid #fff; position: relative; }
.pane { display: flex; align-items: center; gap: 4px; height: 18px; border: 1px solid; border-color: #808080 #fff #fff #808080; white-space: nowrap; }
.pane--fill { flex: 1; }
.pane--small { width: 21px; flex: none; }
.pane--zone { width: 184px; flex: none; padding-left: 1px; }
.pane--filter { width: 34px; flex: none; padding-left: 1px; }
.pane--zoom { width: 95px; flex: none; gap: 2px; padding: 0 23px 0 3px; border-right: 0; }
.grip { position: absolute; right: 0; bottom: 0; width: 12px; height: 12px; }

.taskbar { display: flex; align-items: center; gap: 2px; height: 29px; flex: none; padding: 0 2px; border-top: 1px solid #fff; }
.start, .task { display: flex; align-items: center; height: 23px; flex: none; border: 1px solid; border-color: #fff #808080 #808080 #fff; white-space: nowrap; }
.start { gap: 3px; width: 60px; padding-left: 3px; font-weight: 700; }
.quick { display: flex; gap: 3px; padding: 0 2px; }
.task { width: 161px; padding-left: 3px; gap: 1px; }
.task--on { border-color: #808080 #fff #fff #808080; background: #ffffb8; font-weight: 700; }
.tray { display: flex; align-items: center; justify-content: space-between; width: 64px; height: 22px; margin-left: auto; padding: 0 4px 0 3px; border: 1px solid; border-color: #404040 #fff #fff #404040; }

.popup { position: absolute; left: 222px; top: 101px; display: flex; width: 387px; height: 482px; border: 1px solid #000; background: #fff; font-family: "DejaVu Sans", sans-serif; }
.list { flex: 1; min-width: 0; overflow: hidden; list-style: none; }
.opt { height: 16px; padding: 2px 0 0 20px; font-size: 13px; line-height: 14px; color: #333; white-space: nowrap; overflow: hidden; }
.opt--group { padding-left: 1px; font-weight: 700; font-style: italic; }
.opt--on { background: #0a246a; color: #fff; outline: 1px dotted #e8d890; outline-offset: -1px; }
```
